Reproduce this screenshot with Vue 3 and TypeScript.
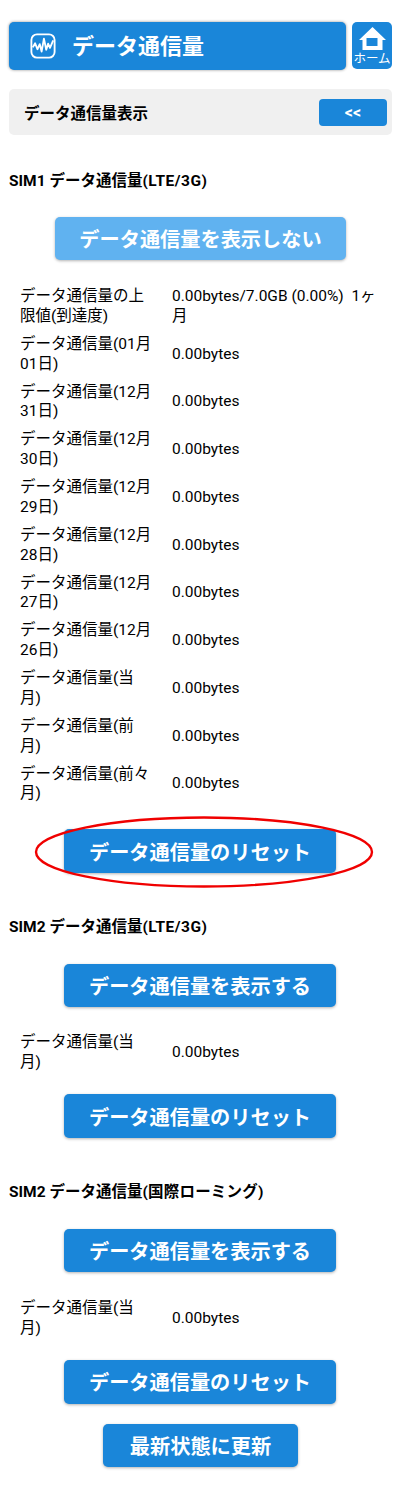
<script setup lang="ts">
interface Row { label: string; value: string }
const sim1: Row[] = [
  { label: 'データ通信量の上限値(到達度)', value: '0.00bytes/7.0GB (0.00%) \u00a01ヶ月' },
  { label: 'データ通信量(01月01日)', value: '0.00bytes' },
  { label: 'データ通信量(12月31日)', value: '0.00bytes' },
  { label: 'データ通信量(12月30日)', value: '0.00bytes' },
  { label: 'データ通信量(12月29日)', value: '0.00bytes' },
  { label: 'データ通信量(12月28日)', value: '0.00bytes' },
  { label: 'データ通信量(12月27日)', value: '0.00bytes' },
  { label: 'データ通信量(12月26日)', value: '0.00bytes' },
  { label: 'データ通信量(当月)', value: '0.00bytes' },
  { label: 'データ通信量(前月)', value: '0.00bytes' },
  { label: 'データ通信量(前々月)', value: '0.00bytes' },
]
const month: Row[] = [{ label: 'データ通信量(当月)', value: '0.00bytes' }]
const sections = [
  { pre: 'SIM2 データ通信量', suf: '(LTE/3G)', cls: 'lte', rows: month },
  { pre: 'SIM2 データ通信量', suf: '(国際ローミング)', cls: 'intl', rows: month },
]
</script>

<template>
  <div class="page">
    <header class="top">
      <h1 class="title">
        <svg class="wave" viewBox="0 0 28 28" width="26" height="26" fill="none" stroke="#fff">
          <rect x="1.5" y="1.5" width="25" height="25" rx="6" stroke-width="2" />
          <path d="M3 15.5 L5.5 11 L8 17.5 L10.5 12 L12.5 20 L15 6 L17.5 18 L19.5 11.5 L21.5 16 L25 8" stroke-width="2" stroke-linejoin="round" />
        </svg>
        <span class="title-text">データ通信量</span>
      </h1>
      <div class="home">
        <svg viewBox="0 0 27 23" width="27" height="23">
          <path fill="#fff" fill-rule="evenodd" d="M13.5 0 L27 13 L23.5 13 L23.5 23 L3.5 23 L3.5 13 L0 13 Z M7.5 11 L7.5 19 L18.5 19 L18.5 11 Z" />
        </svg>
        <span>ホーム</span>
      </div>
    </header>

    <div class="panel">
      <span>データ通信量表示</span>
      <button class="mini">&lt;&lt;</button>
    </div>

    <h2 class="sec first">SIM1 データ通信量<span class="lte">(LTE/3G)</span></h2>
    <button class="btn pale">データ通信量を表示しない</button>
    <div class="rows first-rows">
      <div v-for="r in sim1" :key="r.label" class="row">
        <div class="lab">{{ r.label }}</div>
        <div class="val">{{ r.value }}</div>
      </div>
    </div>
    <div class="marked">
      <button class="btn reset">データ通信量のリセット</button>
      <svg class="ring" viewBox="0 0 340 72" width="340" height="72" fill="none">
        <ellipse cx="170" cy="36" rx="168" ry="34.5" stroke="#f00000" stroke-width="2.4" />
      </svg>
    </div>

    <template v-for="s in sections" :key="s.suf">
      <h2 class="sec">{{ s.pre }}<span :class="s.cls">{{ s.suf }}</span></h2>
      <button class="btn wide">データ通信量を表示する</button>
      <div class="rows" :class="s.cls + '-rows'">
        <div v-for="r in s.rows" :key="r.label" class="row">
          <div class="lab">{{ r.label }}</div>
          <div class="val">{{ r.value }}</div>
        </div>
      </div>
      <button class="btn reset plain">データ通信量のリセット</button>
    </template>

    <button class="btn update">最新状態に更新</button>
  </div>
</template>

<style>
body { background: #fff; }
</style>

<style scoped>
.page {
  width: 400px;
  height: 1492px;
  box-sizing: border-box;
  padding: 22px 8px 0 9px;
  font-family: Roboto, "Noto Sans CJK JP", sans-serif;
  color: #000;
  background: #fff;
  overflow: hidden;
}
.top { display: flex; gap: 6px; align-items: flex-start; }
.title {
  flex: 1;
  height: 48px;
  margin: 0;
  display: flex;
  align-items: center;
  gap: 16px;
  padding-left: 21px;
  box-sizing: border-box;
  background: #1a86d9;
  color: #fff;
  border-radius: 5px;
  font-size: 22px;
  font-weight: 700;
  box-shadow: 0 0 3px rgba(0, 0, 0, 0.45);
}
.title-text { margin-top: -4px; }
.home {
  width: 40px;
  height: 47px;
  background: #1a86d9;
  border-radius: 5px;
  color: #fff;
  display: flex;
  flex-direction: column;
  align-items: center;
  padding-top: 5px;
  box-sizing: border-box;
  font-size: 12.5px;
  line-height: 14px;
}
.home span { white-space: nowrap; margin-top: 2px; }
.panel {
  margin-top: 19px;
  height: 46px;
  background: #f0f0f0;
  border-radius: 5px;
  display: flex;
  align-items: center;
  justify-content: space-between;
  padding: 0 5px 0 15px;
  font-size: 15.5px;
  font-weight: 700;
}
.mini {
  width: 68px;
  height: 27px;
  border: 0;
  padding: 0;
  background: #1a86d9;
  color: #fff;
  border-radius: 4px;
  font: 700 16px Roboto, sans-serif;
}
.sec {
  margin: 44px 0 0;
  font-size: 15.5px;
  line-height: 20px;
  font-weight: 700;
}
.sec.first { margin-top: 36px; }
.lte { letter-spacing: 0.5px; }
.intl { letter-spacing: 0.2px; }
.btn {
  display: block;
  border: 0;
  padding: 0;
  margin: 0;
  background: #1a86d9;
  color: #fff;
  border-radius: 5px;
  font-family: inherit;
  font-size: 20.2px;
  font-weight: 700;
  height: 44px;
  white-space: nowrap;
  box-shadow: 0 1px 3px rgba(0, 0, 0, 0.3);
}
.pale { width: 291px; height: 43px; background: #60b2f0; margin: 26px 0 0 46px; }
.wide { width: 272px; height: 43px; margin: 27px 0 0 55px; }
.reset { width: 272px; margin: 21px 0 0 55px; }
.reset.plain { margin-top: 17px; }
.rows { margin-top: 22px; }
.first-rows { margin-top: 23px; }
.intl-rows { margin-top: 23px; }
.row {
  display: flex;
  align-items: center;
  padding: 4px 0 4px 11px;
  font-size: 15.5px;
  line-height: 19.875px;
}
.lab { width: 134px; flex: none; }
.val { margin-left: 18px; width: 208px; }
.marked { position: relative; }
.ring { position: absolute; left: 25px; top: -13px; pointer-events: none; }
.update { width: 195px; height: 43px; margin: 20px 0 0 94px; }
</style>
